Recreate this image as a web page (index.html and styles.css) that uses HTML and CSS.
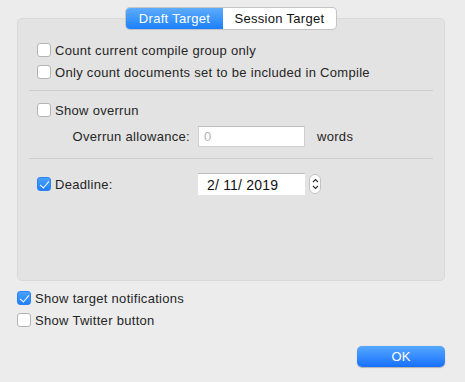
FILE: index.html
```html
<!DOCTYPE html>
<html lang="en">
<head>
  <meta charset="UTF-8">
  <title>Project Targets Options</title>
  <link rel="stylesheet" href="styles.css">
</head>
<body>
  <div class="sheet">
    <div class="tabs-row">
      <div class="tabs">
        <div class="tab tab-active">Draft Target</div>
        <div class="tab">Session Target</div>
      </div>
    </div>

    <div class="panel">
      <label class="row"><span class="check"></span>Count current compile group only</label>
      <label class="row"><span class="check"></span>Only count documents set to be included in Compile</label>

      <div class="sep"></div>

      <label class="row"><span class="check"></span>Show overrun</label>
      <div class="field-row">
        <span class="field-label">Overrun allowance:</span>
        <span class="input placeholder">0</span>
        <span class="suffix">words</span>
      </div>

      <div class="sep sep-lower"></div>

      <div class="field-row deadline">
        <label class="field-label field-label-left"><span class="check checked"></span>Deadline:</label>
        <span class="input date">2/ 11/ 2019</span>
        <span class="stepper">
          <svg width="7" height="16" viewBox="0 0 7 16">
            <path d="M1 6 L3.5 3.5 L6 6" fill="none" stroke="#333" stroke-width="1.1"/>
            <path d="M1 10 L3.5 12.5 L6 10" fill="none" stroke="#333" stroke-width="1.1"/>
          </svg>
        </span>
      </div>
    </div>

    <div class="options">
      <label class="row"><span class="check checked"></span>Show target notifications</label>
      <label class="row"><span class="check"></span>Show Twitter button</label>
    </div>

    <div class="actions">
      <button class="btn-ok">OK</button>
    </div>
  </div>
</body>
</html>
```

FILE: styles.css
```css
* {
  margin: 0;
  padding: 0;
  box-sizing: border-box;
  font-family: "Liberation Sans", Arial, sans-serif;
}

body {
  background-color: #ececec;
  color: #262626;
  font-size: 13px;
  letter-spacing: 0.3px;
}

.sheet {
  width: 465px;
  height: 382px;
  padding: 8px 20px 0 17px;
}

/* segmented control */
.tabs-row {
  display: flex;
  justify-content: center;
  position: relative;
  z-index: 1;
}

.tabs {
  display: flex;
  height: 21px;
  border-radius: 4px;
  background-color: #fff;
  box-shadow: 0 0 0 1px #c4c4c4, 0 1px 1px rgba(0, 0, 0, 0.08);
  overflow: hidden;
}

.tab {
  display: flex;
  align-items: center;
  justify-content: center;
  font-size: 13px;
  color: #111;
}

.tab:first-child {
  width: 97px;
}

.tab:last-child {
  width: 113px;
}

.tab-active {
  color: #fff;
  background: linear-gradient(#5eacfb, #1b80fb);
}

/* grouped box */
.panel {
  margin-top: -11px;
  height: 263px;
  background-color: #e3e3e3;
  border: 1px solid #d9d9d9;
  border-radius: 5px;
  padding: 20px 0 0 19px;
}

.row {
  display: flex;
  align-items: center;
  height: 22px;
}

.check {
  width: 14px;
  height: 14px;
  margin-right: 4px;
  background-color: #fff;
  border: 1px solid #b4b4b4;
  border-radius: 3px;
  flex-shrink: 0;
  position: relative;
}

.check.checked {
  border-color: #2a84f7;
  background: linear-gradient(#4aa0fb, #2280f6);
}

.check.checked::after {
  content: "";
  position: absolute;
  left: 4px;
  top: 1px;
  width: 4px;
  height: 8px;
  border: solid #fff;
  border-width: 0 1.6px 1.6px 0;
  transform: rotate(40deg);
}

.sep {
  height: 1px;
  background-color: #cdcdcd;
  margin: 7px 11px 8px -8px;
}

.sep-lower {
  margin-top: 11px;
  margin-bottom: 14px;
}

.field-row {
  display: flex;
  align-items: center;
  height: 22px;
  margin-top: 4px;
}

.field-label {
  width: 161px;
  padding-right: 8px;
  text-align: right;
}

.field-label-left {
  display: flex;
  align-items: center;
  text-align: left;
}

.input {
  display: flex;
  align-items: center;
  width: 107px;
  height: 21px;
  background-color: #fff;
  border: 1px solid #cfcfcf;
  border-top-color: #bcbcbc;
  padding-left: 5px;
}

.placeholder {
  color: #b3b3b3;
}

.suffix {
  margin-left: 12px;
}

.deadline {
  margin-top: 0;
}

.date {
  height: 22px;
  border: none;
  border-top: 1px solid #bdbdbd;
  padding-left: 9px;
  font-size: 14px;
  letter-spacing: 0.2px;
  color: #111;
}

.stepper {
  display: flex;
  align-items: center;
  justify-content: center;
  width: 12px;
  height: 20px;
  margin-left: 4px;
  background-color: #fff;
  border: 1px solid #c2c2c2;
  border-radius: 6px;
}

/* outside the box */
.options {
  margin-top: 6px;
}

.actions {
  display: flex;
  justify-content: flex-end;
  margin-top: 15px;
}

.btn-ok {
  width: 88px;
  height: 21px;
  border: none;
  border-radius: 5px;
  color: #fff;
  font-size: 13px;
  background: linear-gradient(#57a8ff, #1770fd);
  box-shadow: 0 0.5px 1px rgba(0, 0, 0, 0.25);
}
```
